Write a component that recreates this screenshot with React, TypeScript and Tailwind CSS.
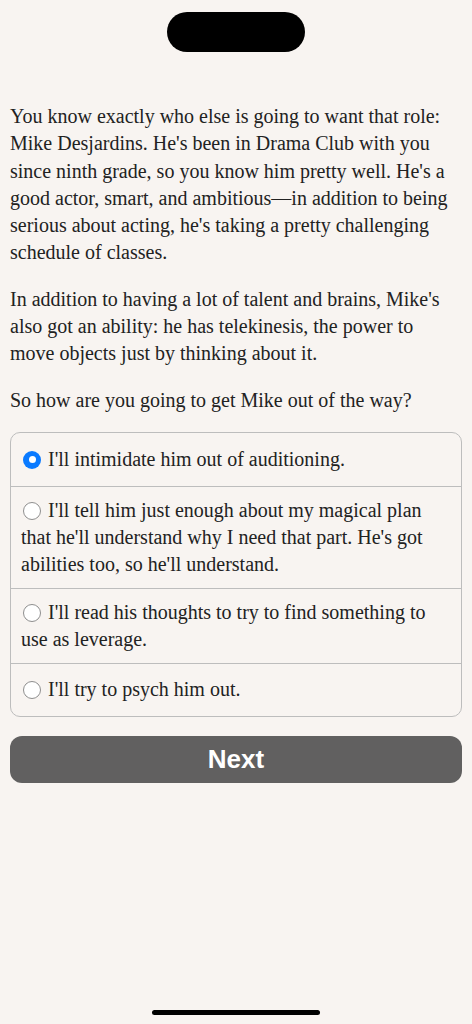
import React, { useState } from 'react'

const OPTIONS = [
  "I'll intimidate him out of auditioning.",
  "I'll tell him just enough about my magical plan that he'll understand why I need that part. He's got abilities too, so he'll understand.",
  "I'll read his thoughts to try to find something to use as leverage.",
  "I'll try to psych him out.",
]

function Radio({ checked }: { checked: boolean }) {
  if (checked) {
    return (
      <span className="inline-block align-[-3px] mr-[7px] ml-[2px] size-[18px] rounded-full bg-[#0a7aff] relative">
        <span className="absolute left-[5.5px] top-[5.5px] size-[7px] rounded-full bg-white" />
      </span>
    )
  }
  return (
    <span className="inline-block align-[-3px] mr-[7px] ml-[2px] size-[18px] rounded-full border-[1.5px] border-[#8e8e8e] bg-white" />
  )
}

export default function App() {
  const [choice, setChoice] = useState(0)

  return (
    <div className="min-h-[1024px] bg-[#f8f4f1] flex flex-col items-stretch text-[#222] font-['Liberation_Serif',serif]">
      {/* Dynamic island */}
      <div className="flex justify-center pt-[12px]">
        <div className="h-[40px] w-[138px] rounded-full bg-black" />
      </div>

      <div className="px-[10px] pt-[51px] text-[20px] leading-[27.3px]">
        <p>
          You know exactly who else is going to want that role: Mike Desjardins. He's been in Drama Club with you
          since ninth grade, so you know him pretty well. He's a good actor, smart, and ambitious—in addition to being
          serious about acting, he's taking a pretty challenging schedule of classes.
        </p>
        <p className="mt-[19px]">
          In addition to having a lot of talent and brains, Mike's also got an ability: he has telekinesis, the power to
          move objects just by thinking about it.
        </p>
        <p className="mt-[19px]">So how are you going to get Mike out of the way?</p>

        <div className="mt-[18px] rounded-[10px] border border-[#bdbdbd] overflow-hidden">
          {OPTIONS.map((o, i) => (
            <div
              key={i}
              onClick={() => setChoice(i)}
              className={`min-h-[53px] flex items-center px-[10px] py-[10px] text-[20px] leading-[27px] ${i > 0 ? 'border-t border-[#bdbdbd]' : ''}`}
            >
              <div>
                <Radio checked={choice === i} />
                {o}
              </div>
            </div>
          ))}
        </div>

        <button className="mt-[19px] w-full h-[47px] rounded-[12px] bg-[#616060] text-white text-[26px] font-bold font-['Liberation_Sans',sans-serif]">
          Next
        </button>
      </div>

      <div className="flex-1" />
      <div className="flex justify-center pb-[9px]">
        <div className="h-[5px] w-[168px] rounded-full bg-black" />
      </div>
    </div>
  )
}
